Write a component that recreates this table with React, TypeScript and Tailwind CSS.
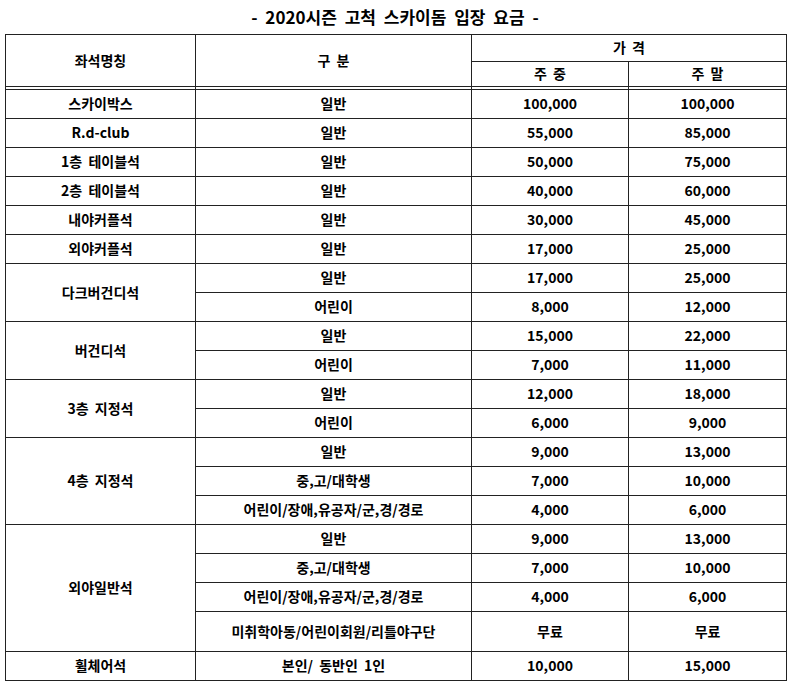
type Sub = { kind: string; weekday: string; weekend: string; tall?: boolean };
type Seat = { name: string; subs: Sub[] };

const seats: Seat[] = [
  { name: '스카이박스', subs: [{ kind: '일반', weekday: '100,000', weekend: '100,000' }] },
  { name: 'R.d-club', subs: [{ kind: '일반', weekday: '55,000', weekend: '85,000' }] },
  { name: '1층 테이블석', subs: [{ kind: '일반', weekday: '50,000', weekend: '75,000' }] },
  { name: '2층 테이블석', subs: [{ kind: '일반', weekday: '40,000', weekend: '60,000' }] },
  { name: '내야커플석', subs: [{ kind: '일반', weekday: '30,000', weekend: '45,000' }] },
  { name: '외야커플석', subs: [{ kind: '일반', weekday: '17,000', weekend: '25,000' }] },
  {
    name: '다크버건디석',
    subs: [
      { kind: '일반', weekday: '17,000', weekend: '25,000' },
      { kind: '어린이', weekday: '8,000', weekend: '12,000' },
    ],
  },
  {
    name: '버건디석',
    subs: [
      { kind: '일반', weekday: '15,000', weekend: '22,000' },
      { kind: '어린이', weekday: '7,000', weekend: '11,000' },
    ],
  },
  {
    name: '3층 지정석',
    subs: [
      { kind: '일반', weekday: '12,000', weekend: '18,000' },
      { kind: '어린이', weekday: '6,000', weekend: '9,000' },
    ],
  },
  {
    name: '4층 지정석',
    subs: [
      { kind: '일반', weekday: '9,000', weekend: '13,000' },
      { kind: '중,고/대학생', weekday: '7,000', weekend: '10,000' },
      { kind: '어린이/장애,유공자/군,경/경로', weekday: '4,000', weekend: '6,000' },
    ],
  },
  {
    name: '외야일반석',
    subs: [
      { kind: '일반', weekday: '9,000', weekend: '13,000' },
      { kind: '중,고/대학생', weekday: '7,000', weekend: '10,000' },
      { kind: '어린이/장애,유공자/군,경/경로', weekday: '4,000', weekend: '6,000' },
      { kind: '미취학아동/어린이회원/리틀야구단', weekday: '무료', weekend: '무료', tall: true },
    ],
  },
  { name: '휠체어석', subs: [{ kind: '본인/ 동반인 1인', weekday: '10,000', weekend: '15,000' }] },
];

const cell = 'border border-[#222] p-0 pb-[2px] text-center align-middle';

export default function App() {
  return (
    <div className="w-[800px] h-[696px] bg-white text-black font-bold font-['Noto_Sans_CJK_KR','Noto_Sans',sans-serif]">
      {/* Title */}
      <div className="h-[34px] flex items-center justify-center pr-[10px] text-[17px] [word-spacing:4px]">
        - 2020시즌 고척 스카이돔 입장 요금 -
      </div>

      <table className="ml-[5px] w-[781px] table-fixed border-collapse text-[14px] leading-none [word-spacing:3px]">
        <colgroup>
          <col className="w-[190px]" />
          <col className="w-[276px]" />
          <col className="w-[157px]" />
          <col className="w-[158px]" />
        </colgroup>
        <thead>
          <tr className="h-[27px]">
            <td rowSpan={2} className={cell}>좌석명칭</td>
            <td rowSpan={2} className={cell}>구 분</td>
            <td colSpan={2} className={cell}>가 격</td>
          </tr>
          <tr className="h-[25px]">
            <td className={cell}>주 중</td>
            <td className={cell}>주 말</td>
          </tr>
          {/* double rule under the header */}
          <tr className="h-[3px]">
            <td className="border-x border-[#222] p-0 text-[0px]" />
            <td className="border-x border-[#222] p-0 text-[0px]" />
            <td className="border-x border-[#222] p-0 text-[0px]" />
            <td className="border-x border-[#222] p-0 text-[0px]" />
          </tr>
        </thead>
        <tbody>
          {seats.map((seat) =>
            seat.subs.map((s, i) => (
              <tr key={seat.name + i} className={s.tall ? 'h-[40px]' : 'h-[29px]'}>
                {i === 0 && (
                  <td rowSpan={seat.subs.length} className={cell}>
                    {seat.name}
                  </td>
                )}
                <td className={cell}>{s.kind}</td>
                <td className={cell}>{s.weekday}</td>
                <td className={cell}>{s.weekend}</td>
              </tr>
            ))
          )}
        </tbody>
      </table>
    </div>
  );
}
